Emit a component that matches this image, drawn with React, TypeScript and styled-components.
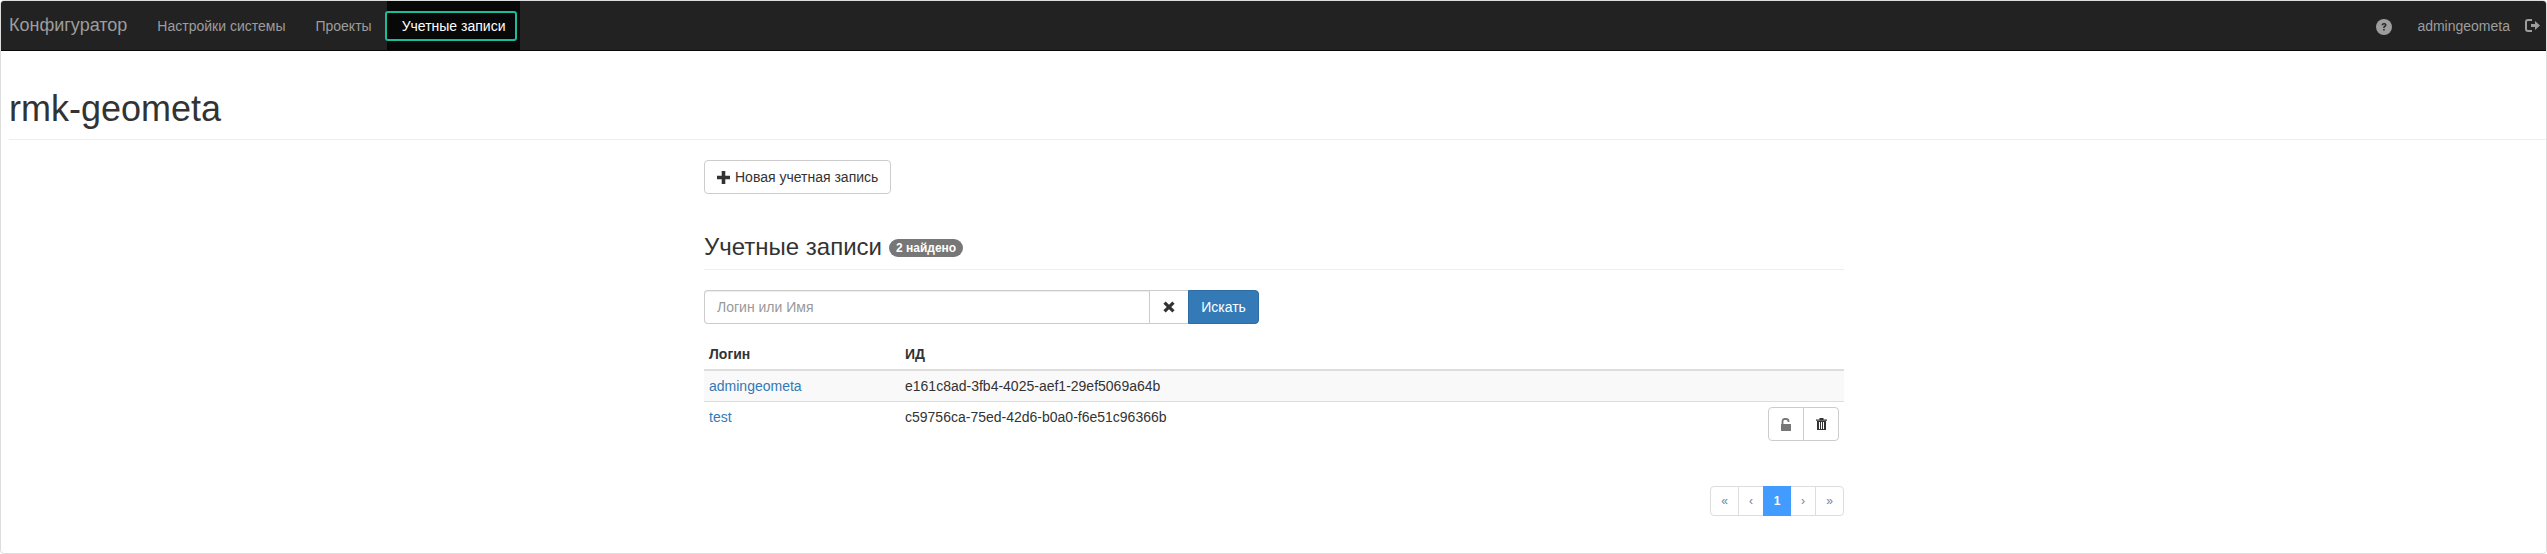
import React from "react";
import styled, { createGlobalStyle } from "styled-components";

const GlobalStyle = createGlobalStyle`
  html, body {
    margin: 0;
    padding: 0;
    background: #fff;
    font-family: "Liberation Sans", Arial, sans-serif;
    font-size: 14px;
    line-height: 20px;
    color: #333;
  }
  * { box-sizing: border-box; }
`;

const Frame = styled.div`
  width: 2547px;
  height: 554px;
  border: 1px solid #ddd;
  border-radius: 4px;
  overflow: hidden;
`;

const Navbar = styled.nav`
  height: 50px;
  background: #222;
  border-bottom: 1px solid #080808;
  display: flex;
  align-items: stretch;
  padding-left: 8px;
`;

const Brand = styled.a`
  font-size: 18px;
  line-height: 49px;
  color: #9d9d9d;
  margin-right: 15px;
`;

const NavItem = styled.a<{ $active?: boolean }>`
  display: flex;
  align-items: center;
  font-size: 14px;
  color: ${(p) => (p.$active ? "#fff" : "#9d9d9d")};
  background: ${(p) => (p.$active ? "#080808" : "transparent")};
  padding: ${(p) => (p.$active ? "0" : "0 15px")};
`;

const ActiveOutline = styled.span`
  display: block;
  border: 2px solid #1abc9c;
  border-radius: 3px;
  padding: 3px 10px 3px 15px;
  margin: 0 3px 0 -2px;
  background: #080808;
`;

const NavRight = styled.div`
  margin-left: auto;
  display: flex;
  align-items: center;
  padding-right: 6px;
  color: #9d9d9d;
`;

const HelpWrap = styled.span`
  display: flex;
  margin-top: 2px;
`;

const Username = styled.span`
  margin-left: 25px;
  margin-right: 15px;
`;

const LogoutWrap = styled.span`
  display: flex;
  margin-top: -1px;
`;

const PageHeader = styled.header`
  margin-left: 8px;
  height: 89px;
  border-bottom: 1px solid #eee;
  display: flex;
  align-items: flex-end;
  padding-bottom: 10px;
`;

const Title = styled.h1`
  margin: 0;
  font-size: 36px;
  line-height: 40px;
  font-weight: 500;
  color: #333;
`;

const Container = styled.main`
  width: 1140px;
  margin-left: 703px;
`;

const NewButton = styled.button`
  display: flex;
  align-items: center;
  gap: 5px;
  height: 34px;
  margin-top: 20px;
  padding: 0 12px;
  background: #fff;
  border: 1px solid #ccc;
  border-radius: 4px;
  font: inherit;
  color: #333;
`;

const SectionHeader = styled.div`
  margin-top: 40px;
  height: 36px;
  border-bottom: 1px solid #eee;
  display: flex;
  align-items: flex-start;
  gap: 7px;
`;

const SectionTitle = styled.h2`
  margin: 0;
  font-size: 24px;
  line-height: 26px;
  font-weight: 500;
`;

const Badge = styled.span`
  margin-top: 5px;
  height: 18px;
  border-radius: 10px;
  padding: 0 7px;
  background: #777;
  color: #fff;
  font-size: 12px;
  font-weight: 700;
  line-height: 18px;
`;

const SearchRow = styled.form`
  display: flex;
  height: 34px;
  margin-top: 20px;
  width: 555px;
`;

const SearchInput = styled.input`
  flex: 1;
  min-width: 0;
  border: 1px solid #ccc;
  border-right: 0;
  border-radius: 4px 0 0 4px;
  box-shadow: inset 0 1px 1px rgba(0, 0, 0, 0.075);
  padding: 6px 12px;
  font: inherit;
  color: #555;
  &::placeholder { color: #999; opacity: 1; }
`;

const ClearButton = styled.button`
  width: 39px;
  background: #fff;
  border: 1px solid #ccc;
  border-right: 0;
  padding: 0;
  display: flex;
  align-items: center;
  justify-content: center;
  color: #333;
`;

const SearchButton = styled.button`
  width: 71px;
  background: #337ab7;
  border: 1px solid #2e6da4;
  border-radius: 0 4px 4px 0;
  color: #fff;
  font: inherit;
  padding: 0;
`;

const Table = styled.table`
  width: 100%;
  margin-top: 15px;
  border-collapse: separate;
  border-spacing: 0;
`;

const Th = styled.th`
  text-align: left;
  font-weight: 700;
  font-size: 14px;
  padding: 5px;
  border-bottom: 2px solid #ddd;
`;

const LoginTh = styled(Th)`
  width: 196px;
`;

const Row = styled.tr<{ $striped?: boolean }>`
  background: ${(p) => (p.$striped ? "#f9f9f9" : "#fff")};
`;

const Td = styled.td<{ $line?: boolean }>`
  padding: 5px;
  vertical-align: top;
  font-size: 14px;
  border-bottom: ${(p) => (p.$line ? "1px solid #ddd" : "0")};
`;

const ActionsCell = styled(Td)`
  text-align: right;
`;

const LoginLink = styled.a`
  color: #337ab7;
`;

const BtnGroup = styled.div`
  display: inline-flex;
  vertical-align: top;
`;

const IconButton = styled.button<{ $side: "left" | "right" }>`
  width: 36px;
  height: 34px;
  padding: 0;
  display: flex;
  align-items: center;
  justify-content: center;
  background: #fff;
  border: 1px solid #ccc;
  margin-left: ${(p) => (p.$side === "right" ? "-1px" : "0")};
  border-radius: ${(p) => (p.$side === "left" ? "4px 0 0 4px" : "0 4px 4px 0")};
`;

const Pager = styled.div`
  display: flex;
  justify-content: flex-end;
  margin-top: 40px;
`;

const PageLink = styled.a<{ $active?: boolean; $w: number }>`
  position: relative;
  z-index: ${(p) => (p.$active ? 1 : 0)};
  width: ${(p) => p.$w}px;
  height: 30px;
  margin-left: -1px;
  display: flex;
  align-items: center;
  justify-content: center;
  font-size: 12px;
  font-weight: ${(p) => (p.$active ? 700 : 400)};
  color: ${(p) => (p.$active ? "#fff" : "#5f87ab")};
  background: ${(p) => (p.$active ? "#429bff" : "#fff")};
  border: 1px solid ${(p) => (p.$active ? "#429bff" : "#ddd")};
  &:first-child { border-radius: 4px 0 0 4px; }
  &:last-child { border-radius: 0 4px 4px 0; }
`;

const HelpIcon = () => (
  <svg width="16" height="16" viewBox="0 0 16 16">
    <circle cx="8" cy="8" r="8" fill="#9d9d9d" />
    <path d="M5.600 6.200c.1-1.500 1.100-2.300 2.500-2.300s2.400.8 2.400 2c0 1-.6 1.400-1.200 1.900-.5.4-.7.6-.7 1.200H7.200c0-1 .3-1.400.9-1.900.5-.4.8-.6.8-1.100 0-.4-.3-.7-.8-.7s-.8.3-.9.9zM7.200 10h1.500v1.600H7.200z" fill="#222" />
  </svg>
);

const LogoutIcon = () => (
  <svg width="15" height="13" viewBox="0 0 15 13">
    <path d="M7 1H3C2 1 1 2 1 3v7c0 1 1 2 2 2h4" fill="none" stroke="#9d9d9d" strokeWidth="2" />
    <path d="M6 5h4V2l5 4.500-5 4.500V8H6z" fill="#9d9d9d" />
  </svg>
);

const PlusIcon = () => (
  <svg width="13" height="13" viewBox="0 0 13 13">
    <path d="M4.700 0h3.600v4.700H13v3.600H8.300V13H4.700V8.300H0V4.700h4.700z" fill="#333" />
  </svg>
);

const CrossIcon = () => (
  <svg width="12" height="12" viewBox="0 0 12 12">
    <path d="M2.700.4 6 3.700 9.300.4l2.300 2.300L8.300 6l3.300 3.300-2.300 2.300L6 8.300l-3.300 3.300L.4 9.300 3.700 6 .4 2.700z" fill="#333" />
  </svg>
);

const UnlockIcon = () => (
  <svg width="10" height="13" viewBox="0 0 10 13">
    <path d="M0 6h10v7H0z" fill="#777" />
    <path d="M1.500 6V3.200C1.500 1.700 2.600.8 4.400.8S7.500 1.700 7.500 3.200V4" fill="none" stroke="#777" strokeWidth="1.800" />
  </svg>
);

const TrashIcon = () => (
  <svg width="11" height="12" viewBox="0 0 11 12">
    <path d="M0 1.500h11v1.200H0zM3.500 0h4v1.500h-4z" fill="#333" />
    <path d="M1 3h9v9H1zM3 4v7h1V4zm2 0v7h1V4zm2 0v7h1V4z" fill="#333" fillRule="evenodd" />
  </svg>
);

export default function App() {
  return (
    <>
      <GlobalStyle />
      <Frame>
        <Navbar>
          <Brand>Конфигуратор</Brand>
          <NavItem>Настройки системы</NavItem>
          <NavItem>Проекты</NavItem>
          <NavItem $active>
            <ActiveOutline>Учетные записи</ActiveOutline>
          </NavItem>
          <NavRight>
            <HelpWrap><HelpIcon /></HelpWrap>
            <Username>admingeometa</Username>
            <LogoutWrap><LogoutIcon /></LogoutWrap>
          </NavRight>
        </Navbar>
        <PageHeader>
          <Title>rmk-geometa</Title>
        </PageHeader>
        <Container>
          <NewButton>
            <PlusIcon /> Новая учетная запись
          </NewButton>
          <SectionHeader>
            <SectionTitle>Учетные записи</SectionTitle>
            <Badge>2 найдено</Badge>
          </SectionHeader>
          <SearchRow>
            <SearchInput placeholder="Логин или Имя" />
            <ClearButton type="button">
              <CrossIcon />
            </ClearButton>
            <SearchButton type="button">Искать</SearchButton>
          </SearchRow>
          <Table>
            <thead>
              <tr>
                <LoginTh>Логин</LoginTh>
                <Th>ИД</Th>
                <Th />
              </tr>
            </thead>
            <tbody>
              <Row $striped>
                <Td $line><LoginLink>admingeometa</LoginLink></Td>
                <Td $line>e161c8ad-3fb4-4025-aef1-29ef5069a64b</Td>
                <Td $line />
              </Row>
              <Row>
                <Td><LoginLink>test</LoginLink></Td>
                <Td>c59756ca-75ed-42d6-b0a0-f6e51c96366b</Td>
                <ActionsCell>
                  <BtnGroup>
                    <IconButton $side="left"><UnlockIcon /></IconButton>
                    <IconButton $side="right"><TrashIcon /></IconButton>
                  </BtnGroup>
                </ActionsCell>
              </Row>
            </tbody>
          </Table>
          <Pager>
            <PageLink $w={29}>«</PageLink>
            <PageLink $w={26}>‹</PageLink>
            <PageLink $w={28} $active>1</PageLink>
            <PageLink $w={26}>›</PageLink>
            <PageLink $w={29}>»</PageLink>
          </Pager>
        </Container>
      </Frame>
    </>
  );
}
